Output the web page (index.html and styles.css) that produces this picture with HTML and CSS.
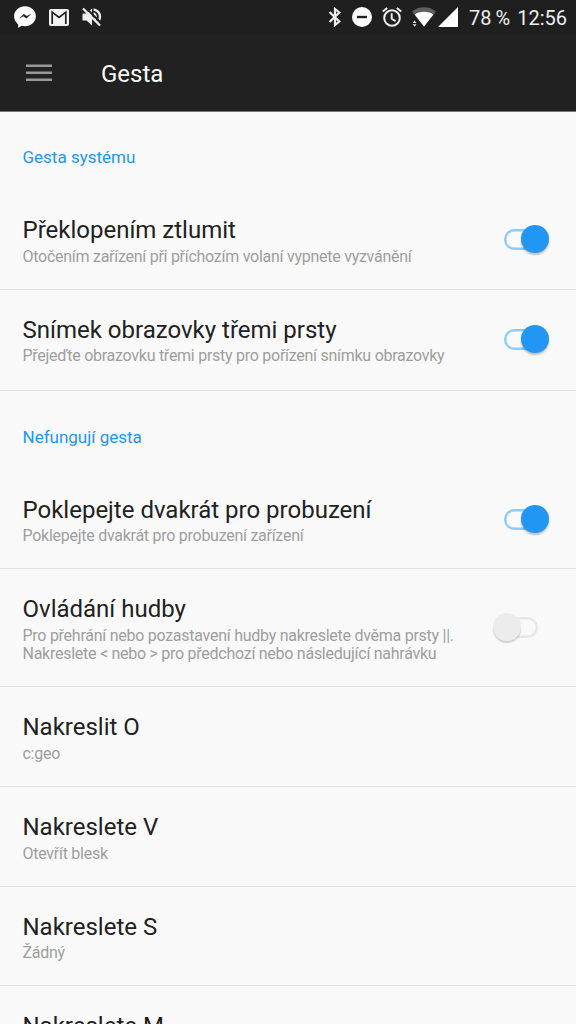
FILE: index.html
```html
<!DOCTYPE html>
<html lang="cs">
<head>
<meta charset="utf-8">
<title>Gesta</title>
<link rel="stylesheet" href="styles.css">
</head>
<body>
<div class="screen">
  <header class="header">
    <div class="status">
      <div class="notifications">
        <svg width="22" height="22" viewBox="0 0 22 22"><path fill="#fff" d="M11 .3C4.900.3.1 4.700.1 10.300c0 3.200 1.500 6 4 7.900v3.500l3.500-2c1.100.3 2.200.5 3.400.5 6.100 0 10.900-4.400 10.900-9.900S17.100.3 11 .3z"/><path fill="#1f1f1f" d="M5 12.500 9.900 7.900l2.900 2.200 4.600-2.300-5 4.600-2.900-2.200z"/></svg>
        <svg width="20" height="17" viewBox="0 0 20 17"><rect width="20" height="17" rx="2" fill="#f2f2f2"/><path fill="none" stroke="#1f1f1f" stroke-width="1.700" d="M3.200 15V3.200L10 8.500l6.800-5.300V15"/></svg>
        <svg width="20" height="20" viewBox="0 0 20 20"><path fill="#eee" d="M.5 6.500h4L10 1.500v17l-5.500-5h-4z"/><path fill="none" stroke="#eee" stroke-width="2.300" d="M11.500 2.300c4 1 6.500 4 6.500 7.500 0 2-.7 3.800-2 5M11.500 6.400c3 1.200 3 5.300.5 6.700"/><path stroke="#1f1f1f" stroke-width="2" d="M3 0l17 17"/><path stroke="#eee" stroke-width="2.300" d="M1 1.500l17 17"/></svg>
      </div>
      <div class="indicators">
        <svg class="bluetooth" width="14" height="20" viewBox="0 0 14 20"><path fill="none" stroke="#eee" stroke-width="2.200" d="M1.500 5l9.800 9.500L7 18V2l4.300 3.500L1.500 15"/></svg>
        <svg class="dnd" width="20" height="20" viewBox="0 0 20 20"><circle cx="10" cy="10" r="10" fill="#fff"/><path fill="#1f1f1f" d="M5 8.800h10v2.400H5z"/></svg>
        <svg class="alarm" width="20" height="20" viewBox="0 0 20 20"><circle cx="10" cy="11" r="7.800" fill="none" stroke="#eee" stroke-width="2"/><path fill="none" stroke="#eee" stroke-width="1.900" d="M.7 4.600 5.200.9M19.300 4.600 14.800.9M9.700 6.300v5.400l3.900 2.400"/></svg>
        <svg class="wifi" width="24" height="20" viewBox="0 0 24 20"><path fill="#606060" d="M0 4.500C7-1.200 17-1.200 24 4.500L12 19.500z"/><path fill="#fff" d="M2.600 7.500C7.500 3.900 16.500 3.900 21.400 7.500L12 19.500z"/><path fill="#1f1f1f" d="M0 12.500h5.500V20H0z"/><path fill="#eee" d="M.7 16 2.600 13.500 4.500 16zM.7 17.300h3.800L2.600 19.700z"/></svg>
        <svg class="signal" width="20" height="20" viewBox="0 0 20 20"><path fill="#fff" d="M20 0v20H0z"/></svg>
        <span class="battery">78 %</span>
        <span class="clock">12:56</span>
      </div>
    </div>
    <div class="toolbar">
      <svg class="menu" width="26" height="18" viewBox="0 0 26 18"><path fill="#999" d="M0 .5h26V3H0zM0 7.500h26V10H0zM0 14.500h26V17H0z"/></svg>
      <h1 class="heading">Gesta</h1>
    </div>
  </header>
  <main>
    <h2 class="section">Gesta systému</h2>
    <div class="row">
      <div class="text"><div class="title">Překlopením ztlumit</div><div class="summary">Otočením zařízení při příchozím volaní vypnete vyzvánění</div></div>
      <div class="switch on"><span class="track"></span><span class="thumb"></span></div>
    </div>
    <div class="row last">
      <div class="text"><div class="title">Snímek obrazovky třemi prsty</div><div class="summary">Přejeďte obrazovku třemi prsty pro pořízení snímku obrazovky</div></div>
      <div class="switch on"><span class="track"></span><span class="thumb"></span></div>
    </div>
    <h2 class="section">Nefungují gesta</h2>
    <div class="row">
      <div class="text"><div class="title">Poklepejte dvakrát pro probuzení</div><div class="summary">Poklepejte dvakrát pro probuzení zařízení</div></div>
      <div class="switch on"><span class="track"></span><span class="thumb"></span></div>
    </div>
    <div class="row tall">
      <div class="text"><div class="title">Ovládání hudby</div><div class="summary">Pro přehrání nebo pozastavení hudby nakreslete dvěma prsty ||.<br>Nakreslete &lt; nebo &gt; pro předchozí nebo následující nahrávku</div></div>
      <div class="switch off"><span class="track"></span><span class="thumb"></span></div>
    </div>
    <div class="row"><div class="text"><div class="title">Nakreslit O</div><div class="summary">c:geo</div></div></div>
    <div class="row"><div class="text"><div class="title">Nakreslete V</div><div class="summary">Otevřít blesk</div></div></div>
    <div class="row"><div class="text"><div class="title">Nakreslete S</div><div class="summary">Žádný</div></div></div>
    <div class="row"><div class="text"><div class="title">Nakreslete M</div></div></div>
  </main>
</div>
</body>
</html>
```
FILE: styles.css
```css
* { box-sizing: border-box; }
body { margin: 0; background: #f9f9f9; font-family: Roboto, sans-serif; }
.screen { width: 576px; height: 1024px; overflow: hidden; background: #f9f9f9; }
h1, h2 { margin: 0; font-weight: 400; }
svg { display: block; flex: none; }
.header { height: 112px; background: #212121; border-bottom: 1px solid #777; }
.status { height: 34px; padding: 0 9px 0 14px; display: flex; justify-content: space-between; align-items: center; background: #1f1f1f; }
.notifications { display: flex; align-items: center; gap: 13px; }
.indicators { display: flex; align-items: center; color: #eee; font-size: 20px; white-space: nowrap; }
.dnd { margin-left: 10px; }
.alarm { margin-left: 10px; }
.wifi { margin-left: 9.500px; }
.signal { margin-left: 2.500px; }
.battery { margin-left: 11px; padding-top: 1px; word-spacing: -1px; }
.clock { margin-left: 7px; padding-top: 1px; }
.toolbar { height: 77px; padding-left: 26px; display: flex; align-items: center; }
.heading { margin-left: 49px; padding-top: 2px; font-size: 24px; line-height: 28px; color: #fafafa; }
.section { height: 78.300px; padding: 34px 22px 0 22.500px; font-size: 17px; line-height: 22px; color: #2196f3; }
.row { height: 99.700px; padding: 26px 27px 0 22.500px; display: flex; justify-content: space-between; border-bottom: 1px solid #e0e0e0; }
.last { height: 100.700px; }
.tall { height: 118px; padding-right: 38px; }
.title { font-size: 24px; line-height: 28px; color: #212121; white-space: nowrap; }
.summary { margin-top: 3.500px; font-size: 16px; line-height: 18px; letter-spacing: -.265px; color: #9e9e9e; white-space: nowrap; }
.last + .section { height: 79px; padding-top: 35px; }
.switch { position: relative; flex: none; width: 45px; height: 29px; margin-top: 9px; }
.tall .switch { margin-top: 18px; }
.track { position: absolute; top: 4px; left: 0; width: 38px; height: 21px; border: 2px solid #90caf9; border-radius: 11px; box-shadow: inset 0 0 0 .5px #90caf9; }
.thumb { position: absolute; top: 0; right: 0; width: 28px; height: 28px; border-radius: 50%; background: #2196f3; box-shadow: 0 2px 2px rgba(0,0,0,.24); }
.off .track { left: auto; right: 0; border-color: #e6e6e6; box-shadow: inset 0 0 0 .5px #e6e6e6; }
.off .thumb { right: auto; left: 0; background: #ececec; box-shadow: 0 2px 1px rgba(0,0,0,.16); }
```
